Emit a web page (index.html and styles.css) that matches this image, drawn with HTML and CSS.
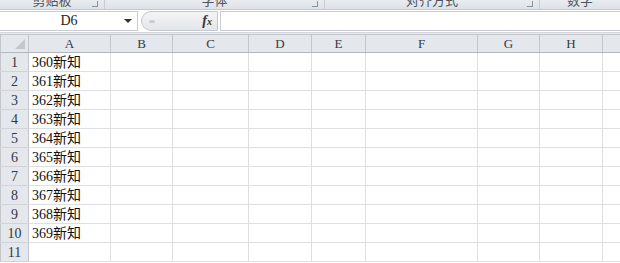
FILE: index.html
```html
<!DOCTYPE html>
<html>
  <head>
    <link rel="stylesheet" href="styles.css">
  </head>
  <body>
    <div class="ribbon">
      <div class="group g-clip"><span class="label">剪贴板</span><span class="launch"></span></div>
      <div class="group g-font"><span class="label">字体</span><span class="launch"></span></div>
      <div class="group g-align"><span class="label">对齐方式</span><span class="launch"></span></div>
      <div class="group g-num"><span class="label">数字</span></div>
    </div>
    <div class="fbar">
      <div class="namebox">
        <span class="name">D6</span>
        <span class="arrow"></span>
      </div>
      <div class="pill">
        <span class="grip"></span>
        <span class="fx"><i>f</i><i class="x">x</i></span>
      </div>
      <div class="input"></div>
    </div>
    <div class="gap"></div>
    <table class="sheet">
      <colgroup>
        <col class="c-hdr">
        <col class="c-a">
        <col class="c-b">
        <col class="c-c">
        <col class="c-d">
        <col class="c-e">
        <col class="c-f">
        <col class="c-g">
        <col class="c-h">
        <col class="c-i">
      </colgroup>
      <thead>
        <tr>
          <th class="corner"><span class="tri"></span></th>
          <th>A</th><th>B</th><th>C</th><th>D</th><th>E</th><th>F</th><th>G</th><th>H</th><th></th>
        </tr>
      </thead>
      <tbody id="rows"></tbody>
    </table>
    <script>
      const rows = document.getElementById("rows");
      for (let i = 1; i <= 11; i++) {
        const tr = document.createElement("tr");
        const th = document.createElement("th");
        th.textContent = i;
        tr.appendChild(th);
        for (let c = 0; c < 9; c++) {
          const td = document.createElement("td");
          if (c === 0 && i <= 10) td.textContent = (359 + i) + "新知";
          tr.appendChild(td);
        }
        rows.appendChild(tr);
      }
    </script>
  </body>
</html>
```

FILE: styles.css
```css
body {
  margin: 0;
  width: 620px;
  height: 263px;
  overflow: hidden;
  background: #ffffff;
  font-family: "Liberation Serif", "Noto Sans CJK SC", serif;
}

.ribbon {
  display: flex;
  height: 9px;
  overflow: hidden;
  background: linear-gradient(#e9ecf0, #dde2e8);
  border-bottom: 1px solid #c3c8cf;
}

.group {
  position: relative;
  display: flex;
  justify-content: center;
  border-right: 1px solid #c7ccd3;
  box-sizing: border-box;
}

.g-clip { width: 105px; }
.g-font { width: 220px; }
.g-align { width: 215px; }
.g-num { flex: 1; border-right: none; }

.label {
  margin-top: -8px;
  font-family: "Noto Sans CJK SC", sans-serif;
  font-size: 13px;
  line-height: 16px;
  color: #4c5460;
}

.launch {
  position: absolute;
  right: 6px;
  top: 1px;
  width: 5px;
  height: 5px;
  border-right: 1px solid #8c939c;
  border-bottom: 1px solid #8c939c;
}

.fbar {
  display: flex;
  align-items: center;
  height: 22px;
  background: #ffffff;
  border-bottom: 1px solid #d3d7dc;
}

.namebox {
  display: flex;
  align-items: center;
  width: 138px;
  height: 20px;
  margin-right: 3px;
  border: 1px solid #c9cdd3;
  border-left: none;
  box-sizing: border-box;
}

.name {
  flex: 1;
  padding-left: 14px;
  text-align: center;
  font-size: 14px;
  color: #222222;
}

.arrow {
  width: 0;
  height: 0;
  margin-right: 5px;
  border-left: 4px solid transparent;
  border-right: 4px solid transparent;
  border-top: 4px solid #333333;
}

.pill {
  display: flex;
  align-items: center;
  justify-content: space-between;
  width: 77px;
  height: 20px;
  border: 1px solid #c4c9cf;
  border-radius: 10px 0 0 10px;
  background: linear-gradient(#f3f4f6, #e3e6ea);
  box-sizing: border-box;
}

.grip {
  width: 6px;
  height: 3px;
  margin-left: 7px;
  border-radius: 2px;
  background: #c9cdd2;
}

.fx {
  margin-right: 5px;
  font-family: "Liberation Serif", serif;
  font-size: 14px;
  font-weight: bold;
  color: #333333;
}

.fx .x {
  font-size: 10px;
}

.input {
  flex: 1;
  height: 20px;
  margin-left: 2px;
  border-top: 1px solid #c9cdd3;
  border-bottom: 1px solid #c9cdd3;
  border-left: 1px solid #c9cdd3;
  box-sizing: border-box;
}

.gap {
  height: 1px;
  background: #e8ebee;
}

.sheet {
  border-collapse: collapse;
  table-layout: fixed;
  width: 640px;
  border-top: 1px solid #b9bec5;
}

.c-hdr { width: 28px; }
.c-a { width: 82px; }
.c-b { width: 62px; }
.c-c { width: 76px; }
.c-d { width: 63px; }
.c-e { width: 54px; }
.c-f { width: 112px; }
.c-g { width: 62px; }
.c-h { width: 63px; }
.c-i { width: 38px; }

th {
  height: 18px;
  padding: 0;
  background: #e4e7eb;
  border: 1px solid #c3c7cc;
  font-weight: normal;
  font-size: 13px;
  line-height: 16px;
  color: #333a44;
  text-align: center;
  box-sizing: border-box;
}

thead th {
  border-bottom: 1px solid #b3b8bf;
}

tbody th {
  height: 19px;
  border-top-color: #d0d4d8;
  border-bottom-color: #d0d4d8;
  font-size: 14px;
  line-height: 17px;
}

.corner {
  position: relative;
}

.tri {
  position: absolute;
  right: 3px;
  bottom: 3px;
  width: 0;
  height: 0;
  border-left: 10px solid transparent;
  border-bottom: 10px solid #c4c8cd;
}

td {
  height: 19px;
  padding: 0 0 0 3px;
  border: 1px solid #dedfe0;
  font-size: 14px;
  line-height: 17px;
  color: #111111;
  white-space: nowrap;
  overflow: hidden;
  box-sizing: border-box;
}
```
